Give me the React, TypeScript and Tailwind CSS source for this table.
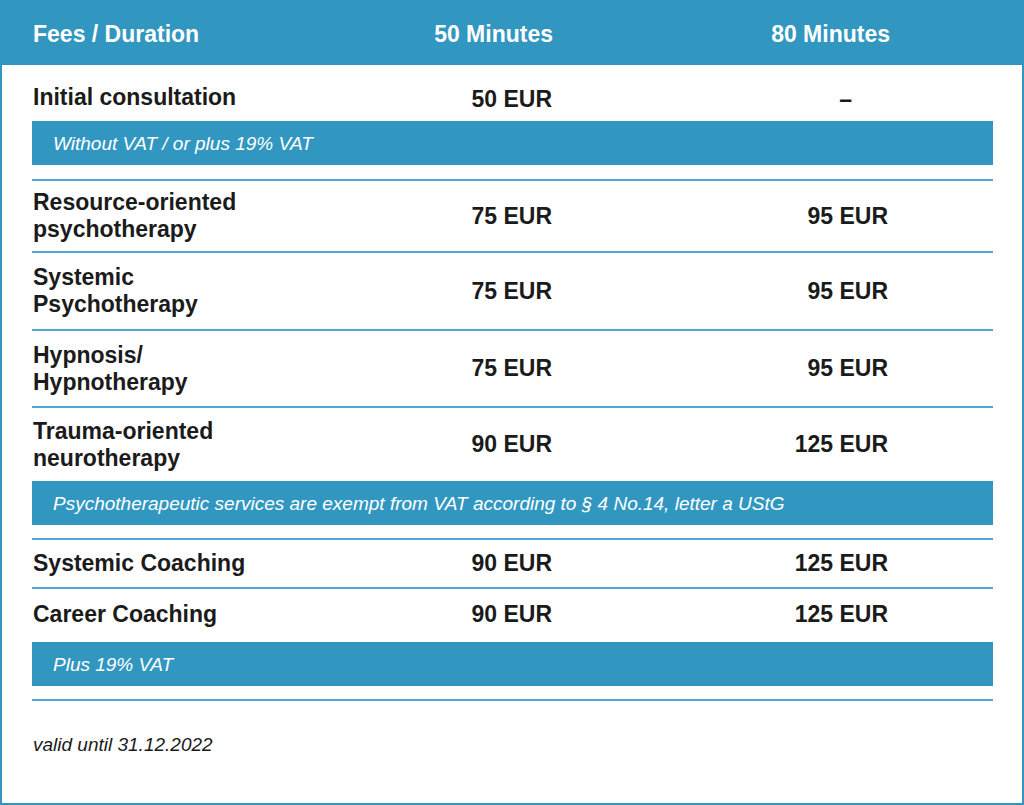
import React from "react";

const BLUE = "bg-[#3297c0]";

function Line() {
  return <div className="h-[2px] bg-[#4ea8d6]" />;
}

function Note({ text }: { text: string }) {
  return (
    <div className="h-[44px] bg-[#3297c0] flex items-center pl-[21px] pt-[3px] text-white italic font-normal text-[19px]">
      {text}
    </div>
  );
}

function Row({
  label,
  p50,
  p80,
  h,
}: {
  label: React.ReactNode;
  p50: string;
  p80: string;
  h: string;
}) {
  return (
    <div className={`grid grid-cols-[320px_200px_336px_1fr] items-center ${h}`}>
      <div className="pl-[1px] leading-[27px]">{label}</div>
      <div className="text-right">{p50}</div>
      <div className="text-right">{p80}</div>
      <div />
    </div>
  );
}

export default function App() {
  return (
    <div
      className="w-[1024px] h-[805px] bg-white border-2 border-t-0 border-[#3297c0] text-[#1b1b1b] font-bold text-[23px]"
      style={{ fontFamily: '"Liberation Sans", Arial, sans-serif' }}
    >
      <div className={`${BLUE} h-[65px] -mx-[2px] px-[32px] pt-[3px] grid grid-cols-[321px_200px_337px_1fr] items-center text-white`}>
        <div className="pl-[1px]">Fees / Duration</div>
        <div className="text-right">50 Minutes</div>
        <div className="text-right">80 Minutes</div>
        <div />
      </div>
      <div className="ml-[30px] w-[961px]">
        <div className="grid grid-cols-[320px_200px_336px_1fr] h-[56px] items-start pt-[21px]">
          <div className="pl-[1px] leading-[23px]">Initial consultation</div>
          <div className="text-right leading-[23px] pt-[2px]">50 EUR</div>
          <div className="text-right leading-[23px] pt-[2px] pr-[36px]">–</div>
          <div />
        </div>
        <Note text="Without VAT / or plus 19% VAT" />
        <div className="h-[14px]" />
        <Line />
        <Row h="h-[70px]" label={<>Resource-oriented<br />psychotherapy</>} p50="75 EUR" p80="95 EUR" />
        <Line />
        <Row h="h-[76px]" label={<>Systemic<br />Psychotherapy</>} p50="75 EUR" p80="95 EUR" />
        <Line />
        <Row h="h-[75px]" label={<>Hypnosis/<br />Hypnotherapy</>} p50="75 EUR" p80="95 EUR" />
        <Line />
        <Row h="h-[73px]" label={<>Trauma-oriented<br />neurotherapy</>} p50="90 EUR" p80="125 EUR" />
        <Note text="Psychotherapeutic services are exempt from VAT according to § 4 No.14, letter a UStG" />
        <div className="h-[13px]" />
        <Line />
        <Row h="h-[47px]" label="Systemic Coaching" p50="90 EUR" p80="125 EUR" />
        <Line />
        <Row h="h-[51px]" label="Career Coaching" p50="90 EUR" p80="125 EUR" />
        <div className="h-[2px]" />
        <Note text="Plus 19% VAT" />
        <div className="h-[13px]" />
        <Line />
        <div className="pt-[33px] pl-[1px] font-normal italic text-[19px] leading-[22px]">
          valid until 31.12.2022
        </div>
      </div>
    </div>
  );
}
